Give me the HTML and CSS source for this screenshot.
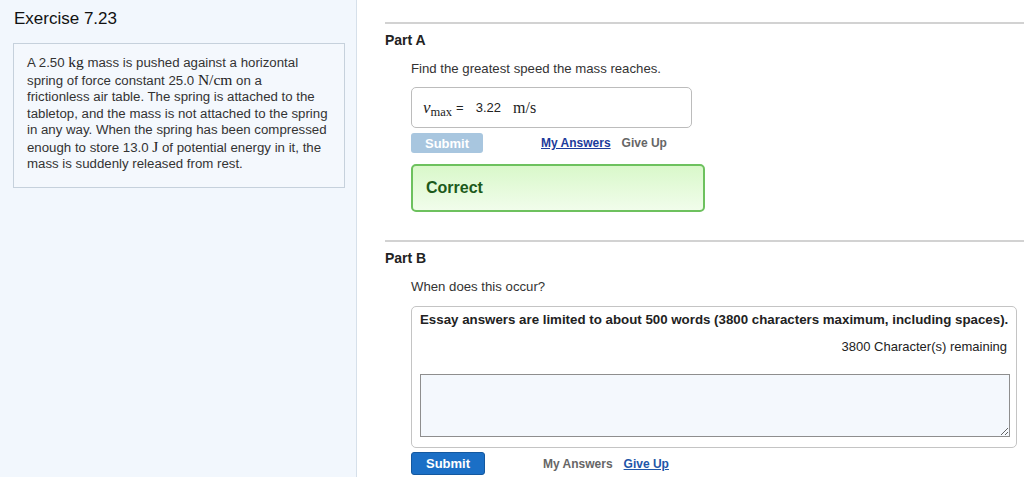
FILE: index.html
```html
<!DOCTYPE html>
<html>
<head>
    <title>Exercise 7.23</title>
    <meta charset="UTF-8">
    <meta name="viewport" content="width=device-width, initial-scale=1.0">
    <link rel="stylesheet" href="styles.css">
</head>
<body>
    <div class="page">
        <div class="problem-panel">
            <h1 class="exercise-title">Exercise 7.23</h1>
            <div class="problem-box">
                A 2.50 <span class="math">kg</span> mass is pushed against a horizontal<br>
                spring of force constant 25.0 <span class="math">N/cm</span> on a<br>
                frictionless air table. The spring is attached to the<br>
                tabletop, and the mass is not attached to the spring<br>
                in any way. When the spring has been compressed<br>
                enough to store 13.0 <span class="math">J</span> of potential energy in it, the<br>
                mass is suddenly released from rest.
            </div>
        </div>

        <div class="parts">
            <div class="part">
                <h2 class="part-title">Part A</h2>
                <div class="part-body">
                    <p class="prompt">Find the greatest speed the mass reaches.</p>
                    <div class="answer-box">
                        <span class="var">v<sub>max</sub></span>
                        <span class="equals">=</span>
                        <span class="value">3.22</span>
                        <span class="unit">m/s</span>
                    </div>
                    <div class="actions">
                        <button class="submit-btn disabled">Submit</button>
                        <a class="link active-link" href="#">My Answers</a>
                        <span class="link muted">Give Up</span>
                    </div>
                    <div class="feedback-correct">Correct</div>
                </div>
            </div>

            <div class="part">
                <h2 class="part-title">Part B</h2>
                <div class="part-body">
                    <p class="prompt">When does this occur?</p>
                    <div class="essay-box">
                        <div class="essay-note">Essay answers are limited to about 500 words (3800 characters maximum, including spaces).</div>
                        <div class="essay-count">3800 Character(s) remaining</div>
                        <textarea class="essay-input"></textarea>
                    </div>
                    <div class="actions actions-b">
                        <button class="submit-btn">Submit</button>
                        <span class="link muted">My Answers</span>
                        <a class="link active-link blue" href="#">Give Up</a>
                    </div>
                </div>
            </div>
        </div>
    </div>
</body>
</html>
```

FILE: styles.css
```css
body {
    margin: 0;
    font-family: "Liberation Sans", Arial, sans-serif;
    color: #222;
    background: white;
}

.page {
    display: flex;
    min-height: 477px;
}

.problem-panel {
    width: 357px;
    flex-shrink: 0;
    background: #f2f7fd;
    border-right: 1px solid #d6e0ea;
    padding: 9px 0 0 13px;
    box-sizing: border-box;
}

.exercise-title {
    margin: 0 0 14px 1px;
    font-size: 17px;
    font-weight: normal;
    line-height: 20px;
    color: #111;
}

.problem-box {
    width: 332px;
    box-sizing: border-box;
    border: 1px solid #c6d1dc;
    background: #f4f8fd;
    padding: 10px 4px 14px 13px;
    font-size: 13.25px;
    line-height: 16.5px;
    color: #333;
    white-space: nowrap;
}

.math {
    font-family: "Liberation Serif", "Times New Roman", serif;
    font-size: 15.5px;
    line-height: 1;
    color: #222;
}

.parts {
    flex: 1;
    padding: 22px 0 0 28px;
}

.part {
    border-top: 2px solid #d2d2d2;
}

.part + .part {
    margin-top: 28px;
}

.part-title {
    margin: 8px 0 0 0;
    font-size: 14px;
    line-height: 17px;
    color: #222;
}

.part-body {
    padding-left: 26px;
}

.prompt {
    margin: 12px 0 0 0;
    font-size: 13.2px;
    line-height: 16px;
    color: #333;
}

.answer-box {
    width: 281px;
    height: 41px;
    box-sizing: border-box;
    margin-top: 10px;
    border: 1px solid #bcbcbc;
    border-radius: 5px;
    display: flex;
    align-items: center;
    padding-left: 11px;
    font-size: 13px;
    color: #222;
}

.var {
    font-family: "Liberation Serif", "Times New Roman", serif;
    font-style: italic;
    font-size: 17px;
}

.var sub {
    font-style: normal;
    font-size: 12.5px;
    vertical-align: -3px;
    line-height: 0;
}

.equals {
    margin-left: 4px;
}

.value {
    margin-left: 12px;
}

.unit {
    margin-left: 12px;
    font-family: "Liberation Serif", "Times New Roman", serif;
    font-size: 16px;
}

.actions {
    display: flex;
    align-items: center;
    margin-top: 5px;
    font-size: 12px;
    font-weight: bold;
}

.submit-btn {
    width: 72px;
    height: 20px;
    border: none;
    border-radius: 3px;
    background: #1b6fc6;
    color: white;
    font-family: "Liberation Sans", Arial, sans-serif;
    font-size: 13px;
    font-weight: bold;
    padding: 0;
    margin-right: 58px;
}

.submit-btn.disabled {
    background: #a8c6df;
}

.link {
    margin-right: 11px;
    color: #666;
    text-decoration: none;
}

.active-link {
    color: #1c3b9b;
    text-decoration: underline;
}

.active-link.blue {
    color: #1f56a8;
}

.feedback-correct {
    width: 294px;
    height: 48px;
    box-sizing: border-box;
    margin-top: 11px;
    border: 2px solid #6dc15e;
    border-radius: 5px;
    background: linear-gradient(#d9f8ca, #f1fdeb);
    display: flex;
    align-items: center;
    padding-left: 13px;
    font-size: 16px;
    font-weight: bold;
    color: #1c5a1b;
}

.essay-box {
    width: 606px;
    height: 142px;
    box-sizing: border-box;
    margin-top: 11px;
    border: 1px solid #c4c4c4;
    border-radius: 5px;
    padding: 5px 6px 0 8px;
}

.essay-note {
    font-size: 13.3px;
    font-weight: bold;
    line-height: 16px;
    color: #222;
}

.essay-count {
    margin-top: 11px;
    text-align: right;
    padding-right: 3px;
    font-size: 13px;
    line-height: 16px;
    color: #222;
}

.essay-input {
    display: block;
    width: 590px;
    height: 63px;
    box-sizing: border-box;
    margin-top: 19px;
    border: 1px solid #8e8e8e;
    background: #f4f8fd;
    border-radius: 0;
    padding: 0;
}

.actions-b {
    margin-top: 4px;
}

.actions-b .submit-btn {
    width: 74px;
    height: 23px;
    border: 1px solid #14589f;
    margin-right: 58px;
}
```
